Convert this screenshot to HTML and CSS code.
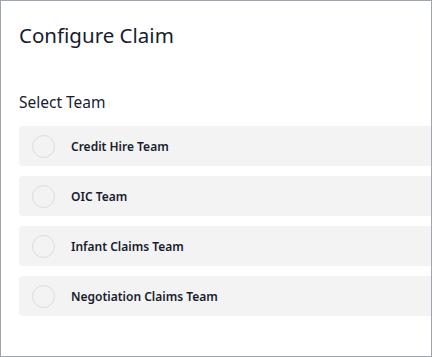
FILE: index.html
```html
<!DOCTYPE html>
<html>
<head>
<meta charset="utf-8">
<link rel="stylesheet" href="styles.css">
</head>
<body>
<div class="frame">
  <h1 class="title">Configure Claim</h1>
  <h2 class="label">Select Team</h2>
  <div class="list">
    <div class="row"><span class="radio"></span><span class="name">Credit Hire Team</span></div>
    <div class="row"><span class="radio"></span><span class="name">OIC Team</span></div>
    <div class="row"><span class="radio"></span><span class="name">Infant Claims Team</span></div>
    <div class="row"><span class="radio"></span><span class="name">Negotiation Claims Team</span></div>
  </div>
</div>
</body>
</html>
```
FILE: styles.css
```css
html, body { margin: 0; padding: 0; background: #fff; }
body { font-family: "Noto Sans", "Liberation Sans", sans-serif; color: #171c2e; }
.frame {
  width: 432px;
  height: 357px;
  box-sizing: border-box;
  border: 1px solid #9ba6b1;
  padding: 20px 0 0 18px;
  overflow: hidden;
}
.title {
  margin: 0;
  font-size: 20.5px;
  line-height: 28px;
  font-weight: 400;
}
.label {
  margin: 43px 0 0;
  font-size: 15.5px;
  line-height: 20px;
  font-weight: 400;
}
.list {
  margin-top: 14px;
  margin-right: -10px;
  display: flex;
  flex-direction: column;
  gap: 10px;
}
.row {
  height: 40px;
  background: #f3f3f3;
  border-radius: 4px;
  display: flex;
  align-items: center;
  padding-left: 13px;
  gap: 16px;
}
.radio {
  width: 23px;
  height: 23px;
  box-sizing: border-box;
  border: 1.5px solid #dcdcdc;
  border-radius: 50%;
  flex: none;
}
.name {
  font-size: 12px;
  font-weight: 600;
}
```
